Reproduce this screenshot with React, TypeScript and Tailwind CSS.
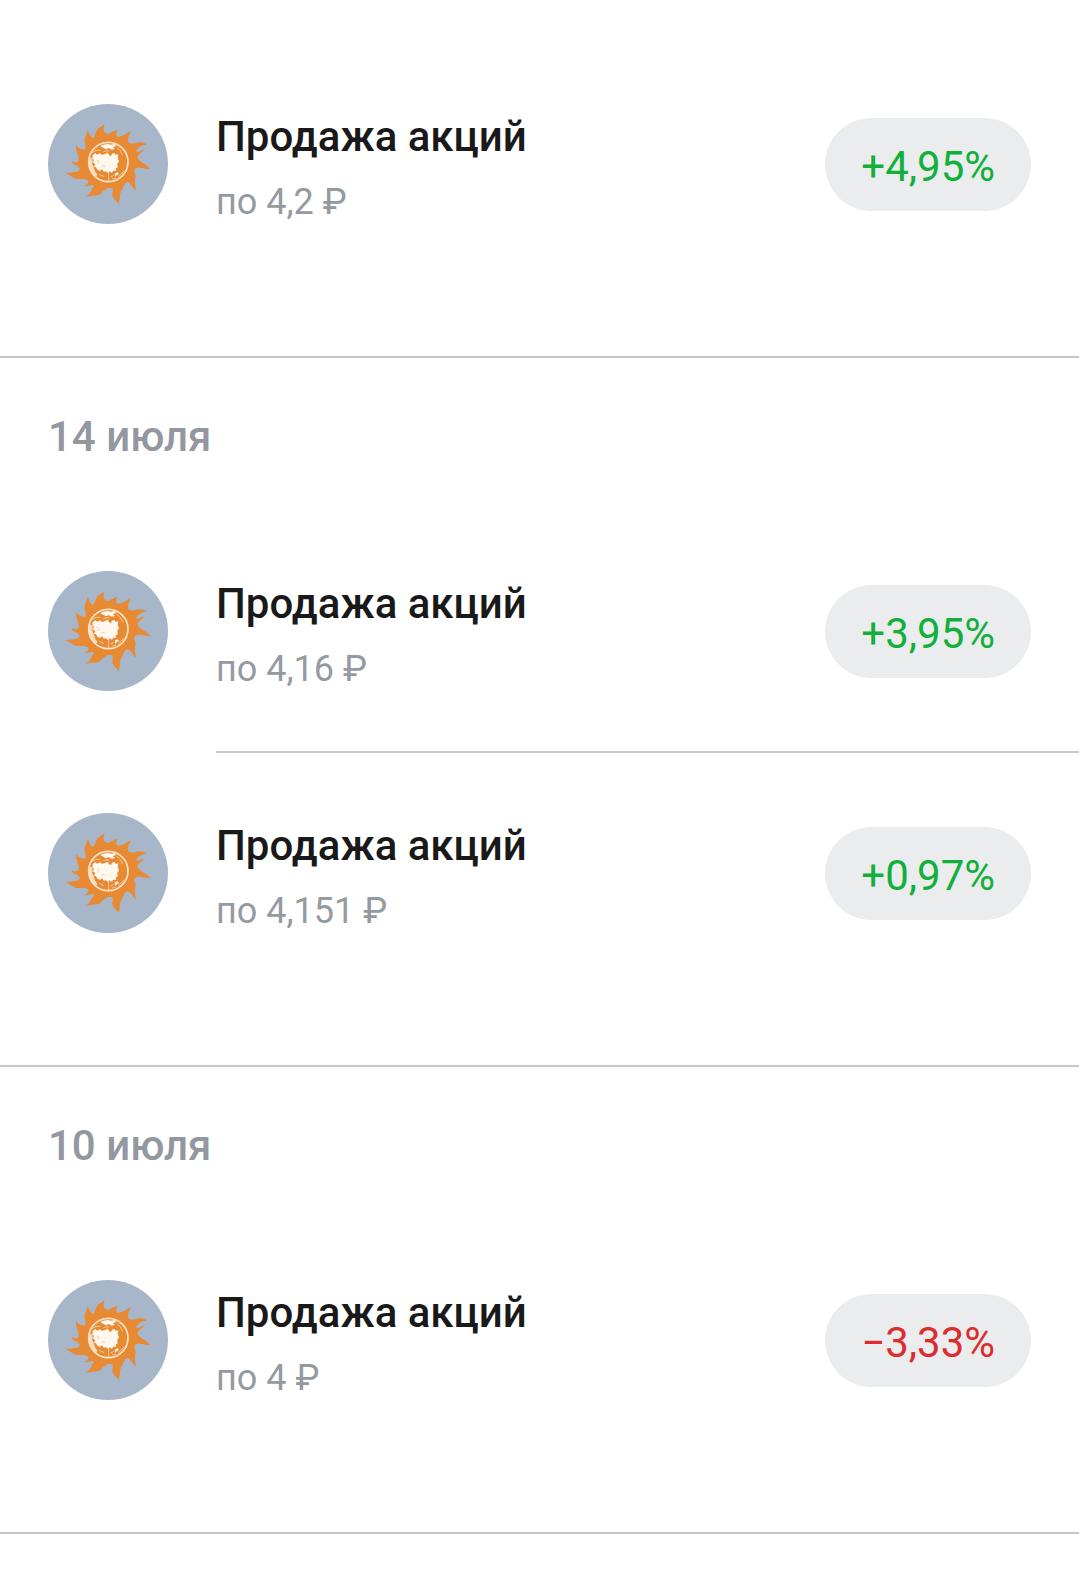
import React from "react";

interface Operation {
    id: number;
    title: string;
    price: string;
    change: string;
}

interface OperationGroup {
    id: string;
    date?: string;
    operations: Operation[];
}

const groups: OperationGroup[] = [
    {
        id: "latest",
        operations: [
            { id: 1, title: "Продажа акций", price: "по 4,2 ₽", change: "+4,95%" },
        ],
    },
    {
        id: "july-14",
        date: "14 июля",
        operations: [
            { id: 2, title: "Продажа акций", price: "по 4,16 ₽", change: "+3,95%" },
            { id: 3, title: "Продажа акций", price: "по 4,151 ₽", change: "+0,97%" },
        ],
    },
    {
        id: "july-10",
        date: "10 июля",
        operations: [
            { id: 4, title: "Продажа акций", price: "по 4 ₽", change: "−3,33%" },
        ],
    },
];

const SunLogo = () => (
    <svg
        viewBox="24 24 360 360"
        className="size-[120px] shrink-0"
        aria-hidden="true"
    >
        <circle cx="204" cy="204" r="180" fill="#a7b7c9" />
        {/* rays */}
        <path
            fill="#e88a34"
            d="M195 83 C189 96 189 106 198 113 C210 116 217 104 233 102
               C227 111 226 121 236 122 C250 121 258 114 271 106
               C272 115 265 119 264 129 C261 140 272 146 286 141
               C298 137 308 138 321 145 C303 148 294 155 287 167
               C298 168 305 162 314 158 C307 168 296 173 293 183
               C294 198 318 202 332 220 C312 219 296 211 285 219
               C277 230 293 236 285 250 C284 262 285 272 289 284
               C277 276 275 263 263 258 C251 261 253 272 245 283
               C236 297 243 311 235 324 C231 314 218 309 217 297
               C217 289 220 284 217 277 C207 272 198 278 189 286
               C176 304 158 297 137 303 C147 296 151 290 156 280
               C158 275 163 271 162 268 C154 264 147 271 133 271
               C141 265 148 259 145 254 C135 246 120 251 106 248
               C96 243 88 237 76 232 C92 227 111 232 119 221
               C121 214 113 210 104 206 C98 204 96 201 94 196
               C105 200 112 199 116 194 C119 177 105 168 109 147
               C114 157 124 160 135 161 C141 153 133 144 134 132
               C135 122 140 116 143 103 C149 112 150 121 157 126
               C166 123 166 108 173 99 C179 92 188 91 195 83Z"
        />
        {/* globe */}
        <circle
            cx="205"
            cy="198"
            r="59"
            fill="none"
            stroke="#fbe3c6"
            strokeWidth="5"
        />
        <g fill="#fff8ee">
            <path d="M158 178 L166 171 L171 176 L180 172 L186 177 L195 174 L203 170 L207 177 L213 181 L216 173 L224 171 L227 177 L235 175 L233 186 L237 196 L232 203 L233 214 L226 219 L229 225 L219 224 L216 230 L209 226 L204 231 L198 226 L191 227 L187 220 L180 224 L173 222 L168 214 L162 212 L166 204 L158 199 L163 191 L157 188Z" />
            <path d="M181 151 L190 146 L203 144 L214 146 L224 144 L228 151 L218 153 L225 159 L214 161 L207 156 L198 160 L190 155Z" />
            <path d="M224 233 L232 229 L237 233 L231 237 L226 242Z" />
        </g>
        {/* hazy western edge and coastlines */}
        <path
            fill="#fdeedd"
            fillOpacity="0.8"
            d="M151 184 L158 190 L157 204 L162 215 L165 226 L172 236 L169 242 L156 230 L148 214 L147 197Z"
        />
        <g fill="none" stroke="#fbe3c6" strokeWidth="2">
            <path d="M206 226 V257" />
            <path d="M156 170 Q168 160 181 163 M190 168 Q198 162 208 165" />
            <path d="M230 153 Q243 163 248 178" />
            <path d="M212 243 L222 238 M234 242 L253 225 M216 249 L228 246 M178 235 L192 242" />
        </g>
        <g fill="none" stroke="#f3b880" strokeWidth="2">
            <path d="M170 192 L177 196 L174 204 M183 213 L189 208 L195 212" />
        </g>
    </svg>
);

const ChangeBadge = ({ value }: { value: string }) => {
    const isNegative = value.startsWith("−");

    return (
        <span
            className={`shrink-0 rounded-full bg-[#ebecee] px-9 pt-6 pb-5 text-[42px] leading-[49px] ${
                isNegative ? "text-[#dd2c2f]" : "text-[#10b03a]"
            }`}
        >
            {value}
        </span>
    );
};

const OperationRow = ({
    operation,
    divided,
}: {
    operation: Operation;
    divided: boolean;
}) => (
    <li className="flex gap-12 pl-12">
        <div className="py-15">
            <SunLogo />
        </div>
        <div
            className={`flex grow items-center justify-between py-15 pr-12 ${
                divided ? "border-b-2 border-[#c6c7ca]" : ""
            }`}
        >
            <div className="flex flex-col gap-[14px] pt-1">
                <h3 className="text-[42px] leading-[58px] font-medium text-[#19191a]">
                    {operation.title}
                </h3>
                <p className="text-[36px] leading-[44px] text-[#959aa1]">
                    {operation.price}
                </p>
            </div>
            <ChangeBadge value={operation.change} />
        </div>
    </li>
);

const App = () => {
    return (
        <main className="min-h-screen w-full bg-white pt-11 font-['Roboto',sans-serif]">
            {groups.map((group) => (
                <section
                    key={group.id}
                    className="border-b-2 border-[#c6c7ca] pb-18"
                >
                    {group.date && (
                        <h2 className="px-12 pt-12 pb-[43px] text-[42px] leading-[62px] font-medium text-[#9297a0]">
                            {group.date}
                        </h2>
                    )}
                    <ul>
                        {group.operations.map((operation, index) => (
                            <OperationRow
                                key={operation.id}
                                operation={operation}
                                divided={index < group.operations.length - 1}
                            />
                        ))}
                    </ul>
                </section>
            ))}
        </main>
    );
};

export default App;
